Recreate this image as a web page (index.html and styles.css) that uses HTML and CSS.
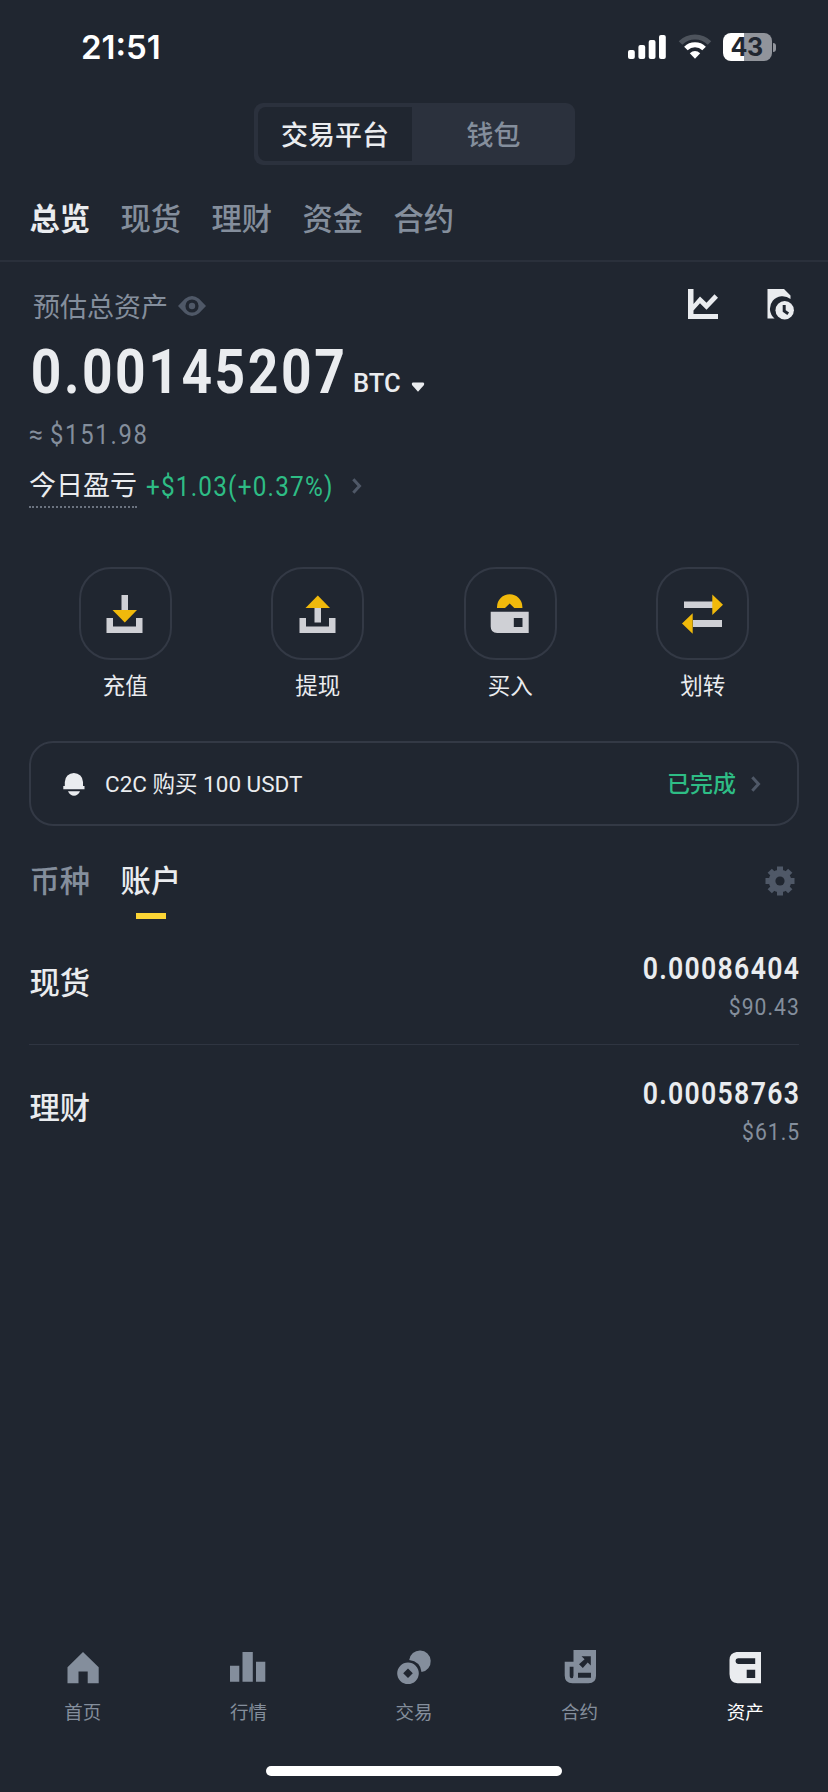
FILE: index.html
```html
<!DOCTYPE html>
<html lang="zh-CN">
<head>
<meta charset="utf-8">
<title>资产</title>
<link rel="stylesheet" href="styles.css">
</head>
<body>
<div class="app">
  <header class="status">
    <span class="clock">21:51</span>
    <div class="status-icons">
      <svg class="signal" width="38" height="24" viewBox="0 0 38 24" fill="#fff"><rect y="15" width="6.8" height="9" rx="2"/><rect x="10.4" y="10" width="6.8" height="14" rx="2"/><rect x="20.7" y="5" width="6.8" height="19" rx="2"/><rect x="31" width="6.8" height="24" rx="2"/></svg>
      <svg class="wifi" width="34" height="26" viewBox="0 0 34 26" fill="none"><path d="M2.5 9A20.5 20.5 0 0 1 31.5 9" stroke="#4d535c" stroke-width="5"/><path d="M7.9 14.5A12.9 12.9 0 0 1 26.1 14.5" stroke="#fff" stroke-width="5"/><path d="M11.8 19.2Q17 14.8 22.2 19.2L17 24.8Z" fill="#fff"/></svg>
      <div class="battery"><span class="battery-level">43</span></div>
    </div>
  </header>

  <div class="segment">
    <span class="segment-item selected">交易平台</span>
    <span class="segment-item">钱包</span>
  </div>

  <nav class="tabs">
    <span class="active">总览</span><span>现货</span><span>理财</span><span>资金</span><span>合约</span>
  </nav>

  <main class="content">
    <section class="summary">
      <div class="summary-head">
        <span class="summary-label">预估总资产</span>
        <svg class="eye" width="28" height="20" viewBox="0 0 28 20"><path fill="#4f5867" fill-rule="evenodd" d="M0 10L7 2.8Q14-2.8 21 2.8L28 10L21 17.2Q14 22.8 7 17.2ZM14 3.4A6.6 6.6 0 1 0 14 16.6A6.6 6.6 0 1 0 14 3.4Z"/><circle cx="14" cy="10" r="3.2" fill="#4f5867"/></svg>
        <div class="summary-tools">
          <svg width="30" height="30" viewBox="0 0 30 30"><path fill="#eaecef" d="M0 0H5.5V15L12 7.5L18.5 13.8L26.5 5.2L30 8.7L18.5 20.8L12 14.3L5.5 21.5V25H30V30H0Z"/></svg>
          <svg width="28" height="31" viewBox="0 0 28 31"><path fill="#eaecef" d="M.5 0H17L23.5 6.5V10A11.5 11.5 0 0 0 7.6 29.6H.5Z"/><circle cx="17.7" cy="21.2" r="9.2" fill="#eaecef"/><path d="M17.2 16V22L21.2 24.8" fill="none" stroke="#202630" stroke-width="3"/></svg>
        </div>
      </div>
      <div class="balance">
        <span class="balance-value">0.00145207</span><span class="balance-unit">BTC</span>
        <svg class="caret" width="14" height="11" viewBox="0 0 14 11"><path d="M1.6.5H12.4Q13.7 1.2 13 3L7 9.8L1 3Q.3 1.2 1.6.5Z" fill="#eaecef"/></svg>
      </div>
      <div class="fiat"><span class="approx">≈</span><span class="fiat-value">$151.98</span></div>
      <div class="pnl">
        <span class="pnl-label">今日盈亏</span><span class="pnl-value">+$1.03(+0.37%)</span>
        <svg class="pnl-chevron" width="10" height="16" viewBox="0 0 10 16"><path d="M1.3 1.3L7.5 8L1.3 14.7" fill="none" stroke="#4f5867" stroke-width="3"/></svg>
      </div>
    </section>

    <section class="actions">
      <div class="action"><div class="tile">
        <svg width="46" height="46" viewBox="0 0 46 46"><path fill="#cfd0d5" d="M19.5 5H26V20H19.5ZM4.5 28H11V36.5H34V28H40.5V43H4.5Z"/><path fill="#f0b90b" d="M10.5 20H35L22.8 32.5Z"/></svg>
      </div><span>充值</span></div>
      <div class="action"><div class="tile">
        <svg width="46" height="46" viewBox="0 0 46 46"><path fill="#cfd0d5" d="M19.5 17H26V32.5H19.5ZM4.5 28H11V36.5H34V28H40.5V43H4.5Z"/><path fill="#f0b90b" d="M10.5 18H35L22.8 5.5Z"/></svg>
      </div><span>提现</span></div>
      <div class="action"><div class="tile">
        <svg width="46" height="46" viewBox="0 0 46 46"><path fill="#f0b90b" d="M10 18V17A12.7 12.7 0 0 1 35.4 17V18H27.3L22.7 13.5L18 18Z"/><path fill="#cfd0d5" fill-rule="evenodd" d="M3.7 21.7H41.7V43H10.2Q3.7 43 3.7 36.5ZM26.8 28V37H35.5V28Z"/></svg>
      </div><span>买入</span></div>
      <div class="action"><div class="tile">
        <svg width="46" height="46" viewBox="0 0 46 46"><path fill="#cfd0d5" d="M4 11.5H33V18H4ZM13 30H42V37H13Z"/><path fill="#f0b90b" d="M32.3 4.5L43 14.8L32.3 25ZM12.7 23.3V43.7L2 33.5Z"/></svg>
      </div><span>划转</span></div>
    </section>

    <section class="notice">
      <svg class="bell" width="22" height="24" viewBox="0 0 22 24" fill="#eaecef"><path d="M1.8 14V10A9 9 0 0 1 20 10V14H21.5V17.3H.3V14ZM5 19.3H17Q15 23.7 11 23.7T5 19.3Z"/></svg>
      <span class="notice-text">C2C 购买 100 USDT</span>
      <span class="notice-status">已完成</span>
      <svg width="10" height="16" viewBox="0 0 10 16"><path d="M1.3 1.3L7.5 8L1.3 14.7" fill="none" stroke="#4f5867" stroke-width="3"/></svg>
    </section>

    <nav class="list-tabs">
      <span>币种</span><span class="active">账户</span>
      <svg class="gear" width="30" height="30" viewBox="-15 -15 30 30"><g fill="#4f5867"><rect x="-3" y="-14.5" width="6" height="29"/><rect x="-3" y="-14.5" width="6" height="29" transform="rotate(45)"/><rect x="-3" y="-14.5" width="6" height="29" transform="rotate(90)"/><rect x="-3" y="-14.5" width="6" height="29" transform="rotate(135)"/><circle r="11.3"/></g><circle r="4.6" fill="#202630"/></svg>
    </nav>

    <section class="accounts">
      <div class="account"><span class="account-name">现货</span><div class="amounts"><span class="amount">0.00086404</span><span class="amount-fiat">$90.43</span></div></div>
      <div class="account"><span class="account-name">理财</span><div class="amounts"><span class="amount">0.00058763</span><span class="amount-fiat">$61.5</span></div></div>
    </section>
  </main>

  <nav class="bottom-nav">
    <div class="nav-item"><svg width="36" height="36" viewBox="0 0 36 36" fill="#848e9c"><path d="M2.5 17.3L18 2L33.7 17.3V33.3H22.7V21.5H13.5V33.3H2.5Z"/></svg><span>首页</span></div>
    <div class="nav-item"><svg width="36" height="36" viewBox="0 0 36 36" fill="#848e9c"><path d="M0 15.8H9.3V31.8H0ZM12.5 2H22.8V31.8H12.5ZM26 11.7H35.3V31.8H26Z"/></svg><span>行情</span></div>
    <div class="nav-item"><svg width="36" height="36" viewBox="0 0 36 36" fill="#848e9c"><path fill-rule="evenodd" d="M12 12.5A10.8 10.8 0 1 0 12 34.1A10.8 10.8 0 1 0 12 12.5ZM12 18.5L16.8 23.3L12 28.1L7.2 23.3Z"/><path d="M13.2 10A10.8 10.8 0 1 1 25.5 22Q24.5 11.5 13.2 10Z"/></svg><span>交易</span></div>
    <div class="nav-item"><svg width="36" height="36" viewBox="0 0 36 36" fill="#848e9c"><path fill-rule="evenodd" d="M11.5 0H34V26Q34 33.3 26.5 33.3H10.5Q2.7 33.3 2.7 25.5V11.8H11.5ZM19.5 6.2L22.6 9.3L17 14.2L20.8 18L25.7 12.4L28.8 15.5V6.2ZM7.7 16.7V25.5Q7.7 28.3 9.6 28.3T11.5 25.5V16.7ZM16 22.7V27.7H29V22.7Z"/></svg><span>合约</span></div>
    <div class="nav-item active"><svg width="36" height="36" viewBox="0 0 36 36" fill="#eaecef"><path fill-rule="evenodd" d="M9.5 2H34V33.3H10.5Q2.5 32.5 2.5 24V10Q2.5 3 9.5 2ZM11 8.2Q8.5 8.4 8.5 11T11 14H28.2V8.2ZM19.7 19.8V28H28.2V19.8Z"/></svg><span>资产</span></div>
  </nav>
  <div class="home-indicator"></div>
</div>
</body>
</html>
```
FILE: styles.css
```css
* { box-sizing: border-box; }

body {
  margin: 0;
  background: #202630;
  color: #eaecef;
  font-family: Roboto, "Noto Sans CJK SC", sans-serif;
}

svg { display: block; flex: none; }

.app {
  width: 828px;
  height: 1792px;
  display: flex;
  flex-direction: column;
  overflow: hidden;
  white-space: nowrap;
}

.status {
  height: 103px;
  padding: 33px 52px 0 81px;
  display: flex;
  justify-content: space-between;
  align-items: flex-start;
}

.clock {
  color: #fff;
  font: 600 33px/29px Inter, sans-serif;
}

.status-icons { display: flex; align-items: flex-start; }
.signal { margin: 2px 12px 0 0; }
.wifi { margin: 1px 11px 0 0; }

.battery {
  position: relative;
  width: 49px;
  height: 28px;
  margin-right: 4px;
  border-radius: 8px;
  background: linear-gradient(90deg, #fff 21px, #91949b 21px);
  color: #202630;
  text-align: center;
  font: 700 25px/28px Inter, sans-serif;
}

.battery::after {
  content: "";
  position: absolute;
  right: -4px;
  top: 10px;
  width: 3px;
  height: 9px;
  border-radius: 0 3px 3px 0;
  background: #91949b;
}

.battery-level { display: block; letter-spacing: -0.5px; padding-right: 2px; }

.segment {
  width: 321px;
  height: 62px;
  margin-left: 254px;
  padding: 4px;
  display: flex;
  border-radius: 9px;
  background: #2b313d;
  font-size: 27px;
  font-weight: 500;
  line-height: 58px;
  text-align: center;
}

.segment-item { width: 159px; padding-left: 4px; color: #848e9c; }

.segment-item.selected {
  width: 154px;
  height: 54px;
  padding-left: 0;
  border-radius: 8px 0 0 8px;
  background: #202630;
  color: #eaecef;
}

.tabs {
  height: 97px;
  padding: 33px 29.5px 0;
  display: flex;
  gap: 30.4px;
  border-bottom: 2px solid #2a303b;
  color: #848e9c;
  font-size: 30.3px;
  font-weight: 500;
  line-height: 44px;
}

.tabs .active { color: #eaecef; font-weight: 700; }

.content { padding: 0 29px; }

.summary-head {
  height: 65px;
  padding: 26px 4px 0;
  display: flex;
  align-items: center;
}

.summary-label { width: 145px; color: #848e9c; font-size: 27px; line-height: 40px; }
.eye { margin-bottom: 3px; }
.summary-tools { display: flex; gap: 49px; margin-left: auto; margin-top: -6px; }

.balance { height: 88px; display: flex; align-items: baseline; line-height: 90px; }

.balance-value {
  width: 324px;
  padding-left: 2px;
  font-size: 62px;
  font-weight: 700;
  letter-spacing: 3px;
  transform: scaleX(0.86);
  transform-origin: left;
}

.balance-unit { width: 58px; font-size: 26px; font-weight: 500; transform: translateY(-1px) scaleX(0.98); transform-origin: left; }
.caret { margin-bottom: 5px; }

.fiat { height: 40px; display: flex; color: #848e9c; font-size: 27px; line-height: 40px; }
.approx { width: 21px; font-size: 25px; }
.fiat-value { letter-spacing: 2px; transform: scaleX(0.88); transform-origin: left; }

.pnl { height: 112px; padding-top: 12px; display: flex; font-size: 27px; line-height: 40px; }
.pnl-label { height: 41px; margin-right: 9px; border-bottom: 2px dotted #6b7380; line-height: 38px; }

.pnl-value {
  width: 206px;
  color: #2ebd85;
  letter-spacing: 1.35px;
  line-height: 41px;
  transform: scaleX(0.9);
  transform-origin: left;
}

.pnl-chevron { margin-top: 11px; }

.actions {
  height: 174px;
  display: grid;
  grid-template-columns: repeat(4, 1fr);
}

.action {
  display: flex;
  flex-direction: column;
  align-items: center;
  font-size: 22.5px;
  line-height: 32px;
}

.tile {
  width: 93px;
  height: 93px;
  margin-bottom: 10px;
  display: grid;
  place-items: center;
  border: 2px solid #333945;
  border-radius: 32px;
}

.tile svg { margin-bottom: 2px; }

.notice {
  height: 85px;
  padding: 0 36px 0 32px;
  display: flex;
  align-items: center;
  border: 2px solid #333945;
  border-radius: 24px;
  font-size: 22.5px;
  line-height: 34px;
}

.notice-text { margin-left: 20px; }

.notice-status {
  margin: 2px 15px 0 auto;
  color: #2ebd85;
  font-size: 23px;
  font-weight: 500;
}

.list-tabs {
  height: 95px;
  padding: 32px 4px 0 0.5px;
  display: flex;
  gap: 30.4px;
  color: #848e9c;
  font-size: 30.3px;
  font-weight: 500;
  line-height: 47px;
}

.list-tabs .active { color: #eaecef; }

.list-tabs .active::after {
  content: "";
  display: block;
  width: 30px;
  height: 6px;
  margin: 8px auto 0;
  background: #fcd535;
}

.gear { margin: 8px 0 0 auto; }

.account {
  height: 124px;
  padding: 1px 0 0 0.5px;
  display: flex;
  justify-content: space-between;
  align-items: center;
}

.account:first-child { border-bottom: 1px solid #2f3541; }
.account-name { margin-top: -4px; font-size: 30.3px; font-weight: 500; }
.amounts { display: flex; flex-direction: column; align-items: flex-end; margin-top: 11px; }

.amount {
  margin-right: -1px;
  font-size: 31px;
  font-weight: 600;
  line-height: 38px;
  letter-spacing: 1.5px;
  transform: scaleX(0.86);
  transform-origin: right;
}

.amount-fiat {
  margin-right: -1px;
  color: #848e9c;
  font-size: 24px;
  line-height: 39px;
  letter-spacing: 1.2px;
  transform: scaleX(0.88);
  transform-origin: right;
}

.bottom-nav {
  height: 116px;
  margin-top: auto;
  display: grid;
  grid-template-columns: repeat(5, 1fr);
  color: #848e9c;
  font-size: 18.5px;
  line-height: 30px;
}

.nav-item { display: flex; flex-direction: column; align-items: center; gap: 12px; }
.nav-item.active { color: #fff; }

.home-indicator {
  width: 296px;
  height: 10px;
  margin: 0 auto 16px;
  border-radius: 5px;
  background: #fff;
}
```
